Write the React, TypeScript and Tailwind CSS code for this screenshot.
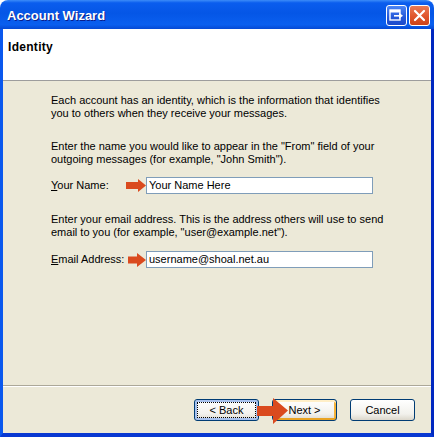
const sans = "font-['Liberation_Sans',Arial,sans-serif]";

function SmallArrow({ w, h, shaft }: { w: number; h: number; shaft: number }) {
  const head = w - shaft;
  const mid = h / 2;
  return (
    <svg width={w} height={h} viewBox={`0 0 ${w} ${h}`} className="shrink-0">
      <polygon
        points={`0,${mid - 3.5} ${shaft},${mid - 3.5} ${shaft},0 ${shaft + head},${mid} ${shaft},${h} ${shaft},${mid + 3.5} 0,${mid + 3.5}`}
        fill="#DA4A1E"
      />
    </svg>
  );
}

function TitleButtons() {
  return (
    <div className="flex gap-[2px]">
      <div className="w-[21px] h-[21px] rounded-[3px] border border-white bg-[linear-gradient(to_bottom,#4C86F5,#2458D8_60%,#1C4ACB)] flex items-center justify-center">
        <svg width="15" height="13" viewBox="0 0 15 13">
          <rect x="1" y="1" width="10" height="10" fill="none" stroke="white" strokeWidth="1.4" />
          <rect x="1" y="1" width="10" height="2.5" fill="white" />
          <rect x="5" y="6" width="6" height="1.6" fill="white" />
          <polygon points="10,3.8 14,6.8 10,9.8" fill="white" />
        </svg>
      </div>
      <div className="w-[21px] h-[21px] rounded-[3px] border border-white bg-[linear-gradient(to_bottom,#E97A55,#E0552B_55%,#CC4218)] flex items-center justify-center">
        <svg width="13" height="13" viewBox="0 0 13 13">
          <path d="M2 2 L11 11 M11 2 L2 11" stroke="white" strokeWidth="2.2" strokeLinecap="round" />
        </svg>
      </div>
    </div>
  );
}

function XpButton({ label, kind }: { label: string; kind?: 'focus' | 'hover' }) {
  const ring =
    kind === 'focus'
      ? 'shadow-[inset_0_0_0_2px_#A7C1EE] outline-1 outline-dotted outline-black -outline-offset-4'
      : kind === 'hover'
        ? 'shadow-[inset_0_2px_0_#FFEFC8,inset_0_-2px_0_#E9A323,inset_2px_0_0_#FAD68A,inset_-2px_0_0_#F5B33A]'
        : '';
  return (
    <div
      className={`w-[65px] h-[22px] rounded-[3px] border border-[#003C74] bg-[linear-gradient(to_bottom,#FFFFFF,#F2F1EC_70%,#DCD7CB)] flex items-center justify-center text-[11px] text-black ${ring}`}
    >
      {label}
    </div>
  );
}

export default function App() {
  return (
    <div className={`w-[434px] h-[437px] flex flex-col bg-white ${sans}`}>
      <div className="h-[29px] shrink-0 rounded-t-[8px] bg-[linear-gradient(to_bottom,#3C8CF8_0%,#0A5DEE_10%,#0556E6_45%,#0A5FEF_85%,#0549D4_100%)] flex items-center justify-between pl-[7px] pr-[4px] pt-[2px]">
        <span className="text-white font-bold text-[13px] [text-shadow:1px_1px_#0A1E8C]">Account Wizard</span>
        <TitleButtons />
      </div>

      <div className="flex-1 flex flex-col border-l-[3px] border-r-[3px] border-b-[4px] border-l-[#0A58EE] border-r-[#0028C0] border-b-[#0838D2]">
        <div className="h-[52px] shrink-0 bg-white border-b border-[#9D9D9D] pl-[5px] pt-[11px]">
          <div className="font-bold text-[12px] leading-[14px] tracking-[0.3px] text-black">Identity</div>
        </div>

        <div className="flex-1 flex flex-col bg-[#ECE9D8]">
          <div className="flex-1 pl-[48px] pt-[13px] text-[11px] leading-[13px] text-black">
            <p>
              Each account has an identity, which is the information that identifies
              <br />
              you to others when they receive your messages.
            </p>
            <p className="mt-[20px]">
              Enter the name you would like to appear in the "From" field of your
              <br />
              outgoing messages (for example, "John Smith").
            </p>
            <div className="mt-[11px] flex items-center h-[17px]">
              <div className="w-[95px] flex items-center justify-between pr-[0px]">
                <span>
                  <span className="underline">Y</span>our Name:
                </span>
                <SmallArrow w={20} h={13} shaft={12} />
              </div>
              <div className="w-[227px] h-[17px] border border-[#7F9DB9] bg-white pl-[2px] flex items-center">
                Your Name Here
              </div>
            </div>
            <p className="mt-[19px]">
              Enter your email address. This is the address others will use to send
              <br />
              email to you (for example, "user@example.net").
            </p>
            <div className="mt-[12px] flex items-center h-[17px]">
              <div className="w-[95px] flex items-center justify-between">
                <span>
                  <span className="underline">E</span>mail Address:
                </span>
                <SmallArrow w={18} h={14} shaft={9} />
              </div>
              <div className="w-[227px] h-[17px] border border-[#7F9DB9] bg-white pl-[2px] flex items-center">
                username@shoal.net.au
              </div>
            </div>
          </div>

          <div className="h-[2px] shrink-0 border-t border-[#ACA899] border-b border-b-white" />

          <div className="relative flex justify-end gap-[13px] pr-[16px] pt-[12px] pb-[12px]">
            <XpButton label="< Back" kind="focus" />
            <XpButton label="Next >" kind="hover" />
            <XpButton label="Cancel" />
            <svg width="31" height="26" viewBox="0 0 31 26" className="absolute left-[254px] top-[11px]">
              <polygon points="0,8 16,8 16,0 31,12.5 16,26 16,18 0,18" fill="#DA4A1E" />
            </svg>
          </div>
        </div>
      </div>
    </div>
  );
}
